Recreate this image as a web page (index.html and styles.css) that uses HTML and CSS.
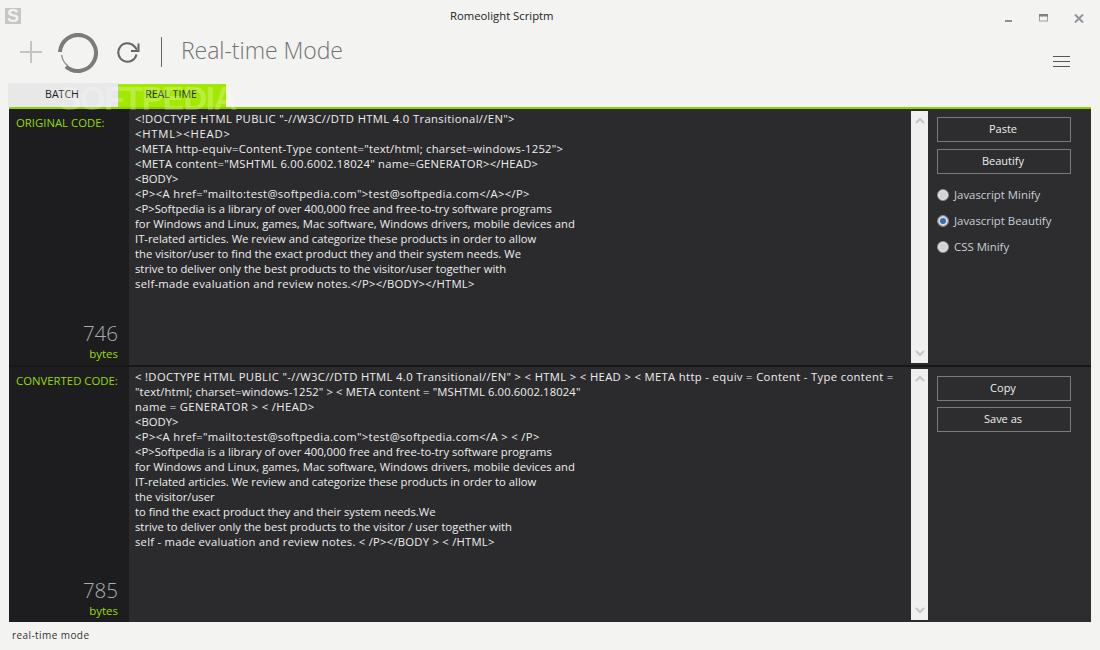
FILE: index.html
```html
<!DOCTYPE html>
<html lang="en">
<head>
<meta charset="utf-8">
<title>Romeolight Scriptm</title>
<link rel="stylesheet" href="styles.css">
</head>
<body>
<div class="app">
  <header class="titlebar">
    <div class="logo">S</div>
    <div class="title">Romeolight Scriptm</div>
    <div class="winctl">
      <svg width="8" height="3" viewBox="0 0 8 3"><rect width="7" height="2" y="0" fill="#8b8f96"/></svg>
      <svg width="10" height="8" viewBox="0 0 10 8"><rect x=".5" y=".5" width="8" height="6.5" fill="none" stroke="#9aa0a8"/><rect width="9" height="2.5" fill="#7d8289"/></svg>
      <svg width="10" height="9" viewBox="0 0 10 9"><path d="M1 .5l8 8M9 .5l-8 8" stroke="#8f949b" stroke-width="2" fill="none"/></svg>
    </div>
  </header>
  <div class="toolbar">
    <svg class="plus" width="22" height="22" viewBox="0 0 22 22"><path d="M11 0v22M0 11h22" stroke="#c4c4c4" stroke-width="2" fill="none"/></svg>
    <svg class="ring" width="40" height="40" viewBox="0 0 40 40"><path d="M2 19A18 18 0 1 1 8 33.4" stroke="#7b7b7b" stroke-width="4" fill="none"/><path d="M3.6 22A16.5 16.5 0 0 0 9.5 32.5" stroke="#8f8f8f" stroke-width="1.4" fill="none"/></svg>
    <svg class="refresh" width="24" height="24" viewBox="0 0 24 24"><path d="M20.5 14.5A9.2 9.2 0 1 1 18.5 6.5L21 9.5" stroke="#666" stroke-width="2" fill="none"/><path d="M22.5 3.5v7.5h-7.5" stroke="#666" stroke-width="2" fill="none"/></svg>
    <div class="divider"></div>
    <div class="mode">Real-time Mode</div>
    <div class="burger"><i></i><i></i><i></i></div>
  </div>
  <div class="tabs">
    <div class="tab">BATCH</div>
    <div class="tab active">REAL TIME</div>
    <div class="watermark">SOFTPEDIA<sup>®</sup></div>
  </div>
  <main class="panel">
    <section class="row">
      <aside class="side">
        <div class="label">ORIGINAL CODE:</div>
        <div class="stat"><div class="num">746</div><div class="unit">bytes</div></div>
      </aside>
      <div class="code">
        <span class="s3">&lt;!DOCTYPE HTML PUBLIC "-//W3C//DTD HTML 4.0 Transitional//EN"&gt;</span>
        <span class="s4">&lt;HTML&gt;&lt;HEAD&gt;</span>
        <span class="s1">&lt;META http-equiv=Content-Type content="text/html; charset=windows-1252"&gt;</span>
        <span class="s1">&lt;META content="MSHTML 6.00.6002.18024" name=GENERATOR&gt;&lt;/HEAD&gt;</span>
        <span>&lt;BODY&gt;</span>
        <span class="s3">&lt;P&gt;&lt;A href="mailto:test@softpedia.com"&gt;test@softpedia.com&lt;/A&gt;&lt;/P&gt;</span>
        <span>&lt;P&gt;Softpedia is a library of over 400,000 free and free-to-try software programs</span>
        <span class="s6">for Windows and Linux, games, Mac software, Windows drivers, mobile devices and</span>
        <span>IT-related articles. We review and categorize these products in order to allow</span>
        <span>the visitor/user to find the exact product they and their system needs. We</span>
        <span>strive to deliver only the best products to the visitor/user together with</span>
        <span class="s2">self-made evaluation and review notes.&lt;/P&gt;&lt;/BODY&gt;&lt;/HTML&gt;</span>
      </div>
      <div class="scroll">
        <svg width="10" height="7" viewBox="0 0 10 7"><path d="M1 6l4-4 4 4" stroke="#c6c6c6" stroke-width="2" fill="none"/></svg>
        <svg width="10" height="7" viewBox="0 0 10 7"><path d="M1 1l4 4 4-4" stroke="#c6c6c6" stroke-width="2" fill="none"/></svg>
      </div>
      <div class="actions">
        <button class="btn">Paste</button>
        <button class="btn">Beautify</button>
        <div class="radios">
          <label class="radio"><span class="dot"></span>Javascript Minify</label>
          <label class="radio"><span class="dot on"></span>Javascript Beautify</label>
          <label class="radio"><span class="dot"></span>CSS Minify</label>
        </div>
      </div>
    </section>
    <section class="row second">
      <aside class="side">
        <div class="label">CONVERTED CODE:</div>
        <div class="stat"><div class="num">785</div><div class="unit">bytes</div></div>
      </aside>
      <div class="code">
        <span class="s3">&lt; !DOCTYPE HTML PUBLIC "-//W3C//DTD HTML 4.0 Transitional//EN" &gt; &lt; HTML &gt; &lt; HEAD &gt; &lt; META http - equiv = Content - Type content =</span>
        <span class="s5">"text/html; charset=windows-1252" &gt; &lt; META content = "MSHTML 6.00.6002.18024"</span>
        <span class="s7">name = GENERATOR &gt; &lt; /HEAD&gt;</span>
        <span>&lt;BODY&gt;</span>
        <span class="s3">&lt;P&gt;&lt;A href="mailto:test@softpedia.com"&gt;test@softpedia.com&lt;/A &gt; &lt; /P&gt;</span>
        <span>&lt;P&gt;Softpedia is a library of over 400,000 free and free-to-try software programs</span>
        <span class="s6">for Windows and Linux, games, Mac software, Windows drivers, mobile devices and</span>
        <span>IT-related articles. We review and categorize these products in order to allow</span>
        <span>the visitor/user</span>
        <span>to find the exact product they and their system needs.We</span>
        <span>strive to deliver only the best products to the visitor / user together with</span>
        <span class="s1">self - made evaluation and review notes. &lt; /P&gt;&lt;/BODY &gt; &lt; /HTML&gt;</span>
      </div>
      <div class="scroll">
        <svg width="10" height="7" viewBox="0 0 10 7"><path d="M1 6l4-4 4 4" stroke="#c6c6c6" stroke-width="2" fill="none"/></svg>
        <svg width="10" height="7" viewBox="0 0 10 7"><path d="M1 1l4 4 4-4" stroke="#c6c6c6" stroke-width="2" fill="none"/></svg>
      </div>
      <div class="actions">
        <button class="btn">Copy</button>
        <button class="btn">Save as</button>
      </div>
    </section>
  </main>
  <footer class="status">real-time mode</footer>
</div>
</body>
</html>
```
FILE: styles.css
```css
* { box-sizing: border-box; }
html, body { margin: 0; padding: 0; }
body { background: #f3f3f1; font-family: "Open Sans", "Noto Sans", sans-serif; }
.app { width: 1100px; height: 650px; display: flex; flex-direction: column; overflow: hidden; }

.titlebar { height: 30px; display: flex; align-items: flex-start; padding: 8px 0 0 5px; flex: none; }
.logo { width: 16px; height: 16px; background: #c6c6c6; color: #f3f3f1; font: bold 18px/16px "Liberation Sans", sans-serif; text-align: center; }
.title { margin-left: 429px; width: 104px; font-size: 11.3px; line-height: 15px; color: #222; white-space: nowrap; }
.winctl { margin-left: 451px; padding-top: 6px; display: flex; align-items: flex-start; gap: 26px; }
.winctl svg:first-child { margin-top: 6px; margin-right: 1px; }
.winctl svg:nth-child(2) { margin-left: -1px; }
.winctl svg:last-child { margin-left: -1px; }

.toolbar { height: 53px; flex: none; display: flex; align-items: center; padding: 0 30px 10px 20px; }
.plus { flex: none; }
.ring { flex: none; margin-left: 16px; margin-top: 2px; }
.refresh { flex: none; margin-left: 18px; }
.divider { width: 1px; height: 30px; background: #666; margin-left: 21px; flex: none; }
.mode { margin-left: 19px; margin-top: -3px; font-size: 23px; font-weight: 300; letter-spacing: -.05px; color: #6f7377; line-height: 30px; white-space: nowrap; }
.burger { margin-left: auto; margin-top: 20px; width: 17px; display: flex; flex-direction: column; gap: 4px; }
.burger i { display: block; height: 1px; background: #555; }

.tabs { height: 24px; flex: none; display: flex; padding-left: 8px; align-items: flex-end; position: relative; z-index: 1; }
.tab { width: 110px; height: 24px; background: #e8e8e8; color: #222; font-size: 10.6px; line-height: 22px; text-align: center; padding-right: 2px; }
.tab.active { width: 108px; height: 23px; background: #a3e800; line-height: 21px; padding-right: 2px; }
.watermark { position: absolute; left: 59px; top: 0; font: bold 33px/31px "Liberation Sans", sans-serif; letter-spacing: -1.3px; color: rgba(255,255,255,.26); white-space: nowrap; pointer-events: none; }
.watermark sup { font-size: 7px; font-weight: normal; vertical-align: 20px; line-height: 0; letter-spacing: 0; }

.panel { margin-left: 9px; width: 1082px; height: 515px; flex: none; border-top: 2px solid #8fd000; background: #171718; display: flex; flex-direction: column; gap: 2px; }
.row { height: 256px; flex: none; display: flex; background: #2b2b2d; }
.row.second { height: 255px; }
.side { width: 120px; flex: none; background: #1d1d1f; padding: 6px 11px 4px 7px; display: flex; flex-direction: column; justify-content: space-between; }
.label { font-size: 11.35px; line-height: 16px; color: #97dc00; white-space: nowrap; }
.stat { text-align: right; }
.num { font-size: 20.5px; line-height: 26px; color: #a7acb2; font-weight: 300; }
.unit { font-size: 11.5px; line-height: 15px; color: #97dc00; }
.code { width: 782px; flex: none; padding: 2px 0 0 6px; font-size: 11.28px; line-height: 15px; color: #eee; overflow: hidden; }
.code span { display: block; white-space: pre; }
.code .s1 { letter-spacing: .24px; }
.code .s2 { letter-spacing: .28px; }
.code .s3 { letter-spacing: .34px; }
.code .s4 { letter-spacing: .8px; }
.code .s5 { letter-spacing: .12px; }
.code .s6 { letter-spacing: .04px; }
.code .s7 { letter-spacing: .37px; }
.scroll { width: 17px; flex: none; margin: 2px 0; background: #f0f0f0; display: flex; flex-direction: column; align-items: center; justify-content: space-between; padding: 6px 0; }
.actions { flex: 1; background: #2d2d2f; padding: 8px 20px 0 9px; display: flex; flex-direction: column; gap: 7px; }
.row.second .actions { padding-top: 9px; gap: 6px; }
.btn { height: 25px; width: 134px; flex: none; padding: 0 2px 2px 0; background: transparent; border: 1px solid #7a7a7a; color: #eee; font: 11px/19px "Open Sans", "Noto Sans", sans-serif; }
.radios { margin-top: 6px; display: flex; flex-direction: column; gap: 10px; }
.radio { height: 16px; display: flex; align-items: center; gap: 5px; font-size: 11.4px; line-height: 16px; color: #c9ced4; white-space: nowrap; }
.dot { width: 12px; height: 12px; border-radius: 50%; flex: none; background: #d2d2d2; border: 1px solid #8a8a8a; box-shadow: inset 0 0 0 1px #eee; }
.dot.on { background: #3d6ca8; box-shadow: inset 0 0 0 2px #dcdcdc; }

.status { flex: 1; padding: 5px 0 0 12px; font-size: 10px; line-height: 16px; letter-spacing: .42px; color: #333; }
```
